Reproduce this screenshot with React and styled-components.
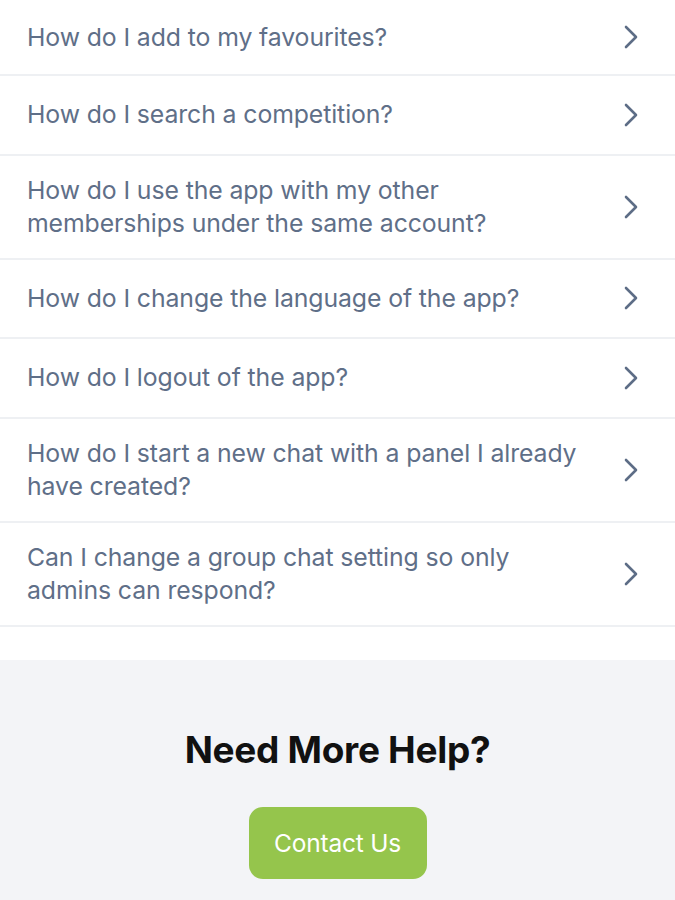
import React from 'react';
import styled, { createGlobalStyle } from 'styled-components';

const GlobalStyle = createGlobalStyle`
  html, body {
    margin: 0;
    padding: 0;
    background: #ffffff;
  }
  body {
    font-family: 'Inter', 'Noto Sans', sans-serif;
  }
`;

const Page = styled.div`
  width: 675px;
  min-height: 900px;
  display: flex;
  flex-direction: column;
  background: #f3f4f7;
`;

const List = styled.ul`
  list-style: none;
  margin: 0;
  padding: 0 0 33px;
  background: #ffffff;
`;

const Row = styled.li`
  display: flex;
  align-items: center;
  justify-content: space-between;
  min-height: 79.5px;
  box-sizing: border-box;
  padding: 18px 36px 18px 27px;
  border-bottom: 2px solid #eef0f3;
  cursor: pointer;

  &:first-child {
    min-height: 76px;
  }
`;

const Question = styled.span`
  font-size: 24.8px;
  line-height: 33px;
  color: #5f6f88;
  max-width: 558px;
  letter-spacing: -0.1px;
`;

const Chevron = styled.svg`
  flex-shrink: 0;
  width: 16px;
  height: 26px;
`;

const HelpSection = styled.section`
  display: flex;
  flex-direction: column;
  align-items: center;
  padding: 67px 0 20px;
  gap: 35px;
`;

const Heading = styled.h2`
  margin: 0;
  font-size: 37px;
  font-weight: 700;
  color: #111111;
  letter-spacing: -0.3px;
`;

const ContactButton = styled.button`
  width: 178px;
  height: 72px;
  border: none;
  border-radius: 14px;
  background: #95c54c;
  color: #ffffff;
  font-family: inherit;
  font-size: 24.5px;
  letter-spacing: -0.2px;
  cursor: pointer;
`;

const questions = [
  'How do I add to my favourites?',
  'How do I search a competition?',
  'How do I use the app with my other memberships under the same account?',
  'How do I change the language of the app?',
  'How do I logout of the app?',
  'How do I start a new chat with a panel I already have created?',
  'Can I change a group chat setting so only admins can respond?',
];

const ArrowRight = () => (
  <Chevron viewBox="0 0 16 26" fill="none">
    <path d="M3 3 L13 13 L3 23" stroke="#5d6d86" strokeWidth="2.6" strokeLinecap="round" strokeLinejoin="round" />
  </Chevron>
);

const App = () => {
  return (
    <Page>
      <GlobalStyle />
      <List>
        {questions.map((q) => (
          <Row key={q}>
            <Question>{q}</Question>
            <ArrowRight />
          </Row>
        ))}
      </List>
      <HelpSection>
        <Heading>Need More Help?</Heading>
        <ContactButton>Contact Us</ContactButton>
      </HelpSection>
    </Page>
  );
};

export default App;
